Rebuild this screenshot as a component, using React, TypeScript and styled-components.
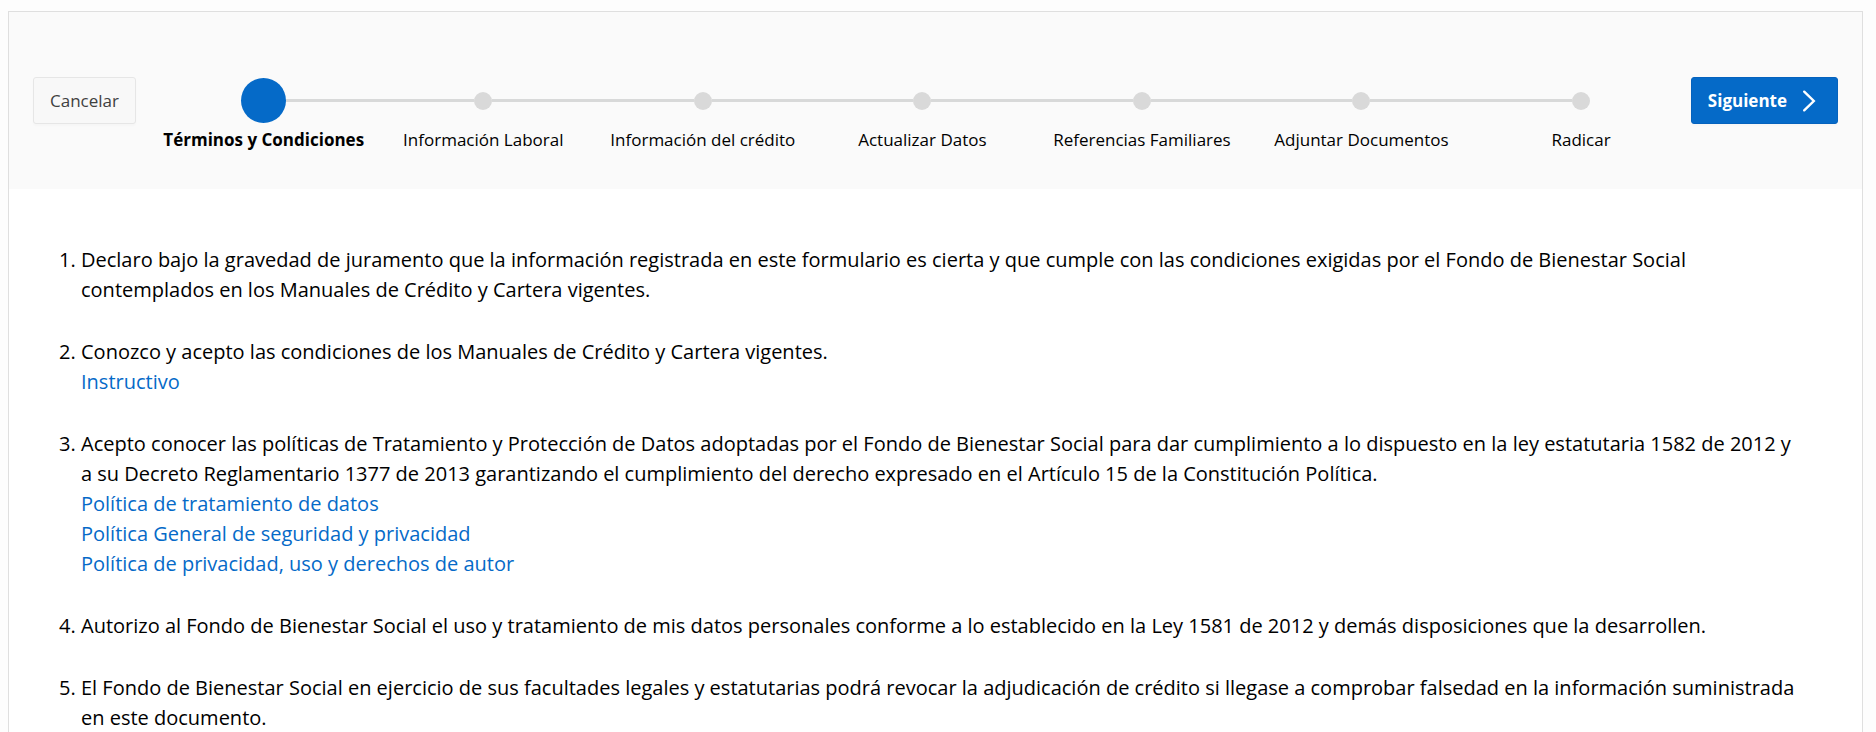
import React, { useState } from 'react'
import styled, { createGlobalStyle } from 'styled-components'

interface Term {
  text: string
  links?: string[]
}

const steps: string[] = [
  'Términos y Condiciones',
  'Información Laboral',
  'Información del crédito',
  'Actualizar Datos',
  'Referencias Familiares',
  'Adjuntar Documentos',
  'Radicar',
]

const terms: Term[] = [
  {
    text: 'Declaro bajo la gravedad de juramento que la información registrada en este formulario es cierta y que cumple con las condiciones exigidas por el Fondo de Bienestar Social contemplados en los Manuales de Crédito y Cartera vigentes.',
  },
  {
    text: 'Conozco y acepto las condiciones de los Manuales de Crédito y Cartera vigentes.',
    links: ['Instructivo'],
  },
  {
    text: 'Acepto conocer las políticas de Tratamiento y Protección de Datos adoptadas por el Fondo de Bienestar Social para dar cumplimiento a lo dispuesto en la ley estatutaria 1582 de 2012 y a su Decreto Reglamentario 1377 de 2013 garantizando el cumplimiento del derecho expresado en el Artículo 15 de la Constitución Política.',
    links: [
      'Política de tratamiento de datos',
      'Política General de seguridad y privacidad',
      'Política de privacidad, uso y derechos de autor',
    ],
  },
  {
    text: 'Autorizo al Fondo de Bienestar Social el uso y tratamiento de mis datos personales conforme a lo establecido en la Ley 1581 de 2012 y demás disposiciones que la desarrollen.',
  },
  {
    text: 'El Fondo de Bienestar Social en ejercicio de sus facultades legales y estatutarias podrá revocar la adjudicación de crédito si llegase a comprobar falsedad en la información suministrada en este documento.',
  },
]

function App() {
  const [current, setCurrent] = useState<number>(0)

  const next = (): void => setCurrent(Math.min(current + 1, steps.length - 1))

  return (
    <>
      <GlobalStyle />
      <Wizard>
        <Header>
          <CancelButton type="button" onClick={() => setCurrent(0)}>Cancelar</CancelButton>
          <Steps>
            {steps.map((label, i) => (
              <Step key={label} aria-current={i === current ? 'step' : undefined}>
                <Track>
                  <Line $hidden={i === 0} />
                  <Marker $active={i === current} />
                  <Line $hidden={i === steps.length - 1} />
                </Track>
                <Label $active={i === current}>{label}</Label>
              </Step>
            ))}
          </Steps>
          <NextButton type="button" onClick={next}>
            Siguiente
            <svg width="24" height="24" viewBox="0 0 24 24" fill="none" stroke="currentColor" strokeWidth="2.4" strokeLinecap="round" aria-hidden="true">
              <path d="M7.200 2.700L16.800 12L7.200 21.300" />
            </svg>
          </NextButton>
        </Header>
        <Body>
          <TermList>
            {terms.map((term) => (
              <TermItem key={term.text}>
                {term.text}
                {term.links?.map((link) => (
                  <TermLink key={link} href="#">{link}</TermLink>
                ))}
              </TermItem>
            ))}
          </TermList>
        </Body>
      </Wizard>
    </>
  )
}

const GlobalStyle = createGlobalStyle`
  * {
    box-sizing: border-box;
  }
  body {
    margin: 0;
    background: #fdfdfd;
    color: #000;
    font-family: 'Segoe UI', 'Open Sans', 'Noto Sans', sans-serif;
  }
`

const Wizard = styled.main`
  margin: 11px 13px 0 8px;
  min-height: calc(100vh - 11px);
  border: 1px solid #dfdfdf;
  border-bottom: 0;
  background: #fff;
`

const Header = styled.header`
  display: flex;
  align-items: flex-start;
  padding: 65px 24px 37px;
  background: #fafafa;
`

const Button = styled.button`
  display: flex;
  align-items: center;
  height: 47px;
  padding: 0 16px;
  border-radius: 3px;
  font-family: inherit;
  font-size: 17px;
  line-height: 24px;
  box-shadow: 0 2px 2px rgba(0, 0, 0, 0.02);
  cursor: pointer;
`

const CancelButton = styled(Button)`
  border: 1px solid #e6e6e6;
  background: #f8f8f8;
  color: #404040;
`

const NextButton = styled(Button)`
  gap: 10px;
  border: 1px solid #0562bd;
  background: #056ac8;
  color: #fff;
  font-weight: 700;
`

const Steps = styled.ol`
  display: flex;
  flex: 1;
  margin: 0 0 0 18px;
  padding: 0;
  list-style: none;
`

const Step = styled.li`
  flex: 1 1 0;
  min-width: 0;
`

const Track = styled.div`
  display: flex;
  align-items: center;
  height: 47px;
`

const Line = styled.span<{ $hidden: boolean }>`
  flex: 1;
  height: 3px;
  background: ${(p) => (p.$hidden ? 'transparent' : '#d8d9d9')};
`

const Marker = styled.span<{ $active: boolean }>`
  width: ${(p) => (p.$active ? 45 : 18)}px;
  height: ${(p) => (p.$active ? 45 : 18)}px;
  border-radius: 50%;
  background: ${(p) => (p.$active ? '#056ac8' : '#d9d9d9')};
`

const Label = styled.div<{ $active: boolean }>`
  margin-top: 4px;
  font-size: 17px;
  line-height: 24px;
  font-weight: ${(p) => (p.$active ? 700 : 400)};
  text-align: center;
`

const Body = styled.section`
  padding: 56px 60px 24px 72px;
`

const TermList = styled.ol`
  margin: 0;
  padding: 0;
  font-size: 20px;
  line-height: 30px;
`

const TermItem = styled.li`
  margin-bottom: 32px;
`

const TermLink = styled.a`
  display: block;
  width: fit-content;
  color: #056ac8;
  text-decoration: none;
`

export default App
